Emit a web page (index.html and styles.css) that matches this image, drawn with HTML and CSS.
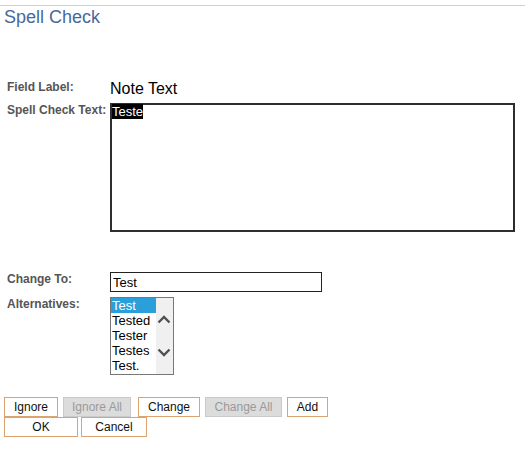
FILE: index.html
```html
<!DOCTYPE html>
<html>
<head>
<meta charset="utf-8">
<title>Spell Check</title>
<link rel="stylesheet" href="styles.css">
</head>
<body>
<div class="topline"></div>
<h1 class="title">Spell Check</h1>
<div class="form">
  <div class="row row-field">
    <div class="label">Field Label:</div>
    <div class="value">Note Text</div>
  </div>
  <div class="row row-text">
    <div class="label">Spell Check Text:</div>
    <div class="textbox"><span class="sel">Teste</span></div>
  </div>
  <div class="row row-change">
    <div class="label">Change To:</div>
    <input class="change-input" type="text" value="Test">
  </div>
  <div class="row row-alt">
    <div class="label">Alternatives:</div>
    <div class="listbox">
      <div class="items">
        <div class="item selected">Test</div>
        <div class="item">Tested</div>
        <div class="item">Tester</div>
        <div class="item">Testes</div>
        <div class="item">Test.</div>
      </div>
      <div class="scrollbar">
        <svg class="arrow up" width="14" height="9" viewBox="0 0 14 9"><path d="M1.5 7.5 L7 2 L12.5 7.5" fill="none" stroke="#505050" stroke-width="2.4"/></svg>
        <svg class="arrow down" width="14" height="9" viewBox="0 0 14 9"><path d="M1.5 1.5 L7 7 L12.5 1.5" fill="none" stroke="#505050" stroke-width="2.4"/></svg>
      </div>
    </div>
  </div>
</div>
<div class="buttons">
  <div class="btn-row">
    <button class="btn b-ignore">Ignore</button>
    <button class="btn disabled b-ignoreall">Ignore All</button>
    <button class="btn b-change">Change</button>
    <button class="btn disabled b-changeall">Change All</button>
    <button class="btn b-add">Add</button>
  </div>
  <div class="btn-row row2">
    <button class="btn b-ok">OK</button>
    <button class="btn b-cancel">Cancel</button>
  </div>
</div>
</body>
</html>
```
FILE: styles.css
```css
html, body {
  margin: 0;
  padding: 0;
  background: #fff;
}
body {
  font-family: "Liberation Sans", Arial, sans-serif;
  color: #000;
}
.topline {
  margin-top: 5px;
  border-top: 1px solid #cfcfd4;
}
.title {
  margin: 0;
  padding-left: 4px;
  font-size: 18px;
  font-weight: normal;
  line-height: 22px;
  color: #46699a;
}
.form {
  padding-left: 7px;
  margin-top: 52px;
}
.row {
  display: flex;
  align-items: flex-start;
}
.label {
  width: 103px;
  flex: none;
  font-size: 12px;
  line-height: 14px;
  font-weight: bold;
  color: #555;
}
.row-field { margin-bottom: 5px; }
.value {
  font-size: 16px;
  line-height: 18px;
}
.row-text { margin-bottom: 40px; }
.textbox {
  width: 401px;
  height: 125px;
  border: 2px solid #2e2e2e;
  font-size: 13px;
  line-height: 14px;
}
.sel {
  background: #000;
  color: #fff;
}
.row-change { margin-bottom: 5px; }
.change-input {
  box-sizing: border-box;
  width: 212px;
  height: 20px;
  margin: 0;
  padding: 0 2px;
  border: 1px solid #222;
  font-family: "Liberation Sans", Arial, sans-serif;
  font-size: 13px;
  line-height: 18px;
  color: #000;
  outline: none;
}
.listbox {
  box-sizing: border-box;
  width: 64px;
  height: 78px;
  border: 1px solid #777;
  display: flex;
}
.items {
  width: 45px;
  font-size: 13px;
  line-height: 15px;
}
.item {
  height: 15px;
  padding-left: 1px;
  white-space: nowrap;
}
.item.selected {
  background: #2a9fd9;
  color: #fff;
}
.scrollbar {
  flex: 1;
  background: #f0f0f0;
  position: relative;
}
.arrow {
  position: absolute;
  left: 1px;
  display: block;
}
.arrow.up { top: 17px; }
.arrow.down { top: 50px; }
.buttons {
  margin-top: 22px;
  padding-left: 4px;
}
.btn-row {
  display: flex;
  gap: 5px;
}
.btn-row.row2 { gap: 3px; }
.btn {
  box-sizing: border-box;
  height: 20px;
  margin: 0;
  padding: 0;
  border: 1px solid #daa370;
  background: #fff;
  font-family: "Liberation Sans", Arial, sans-serif;
  font-size: 12px;
  line-height: 18px;
  color: #111;
  border-radius: 0;
  white-space: nowrap;
  text-align: center;
  flex: none;
}
.btn.disabled {
  background: #dcdcdc;
  border-color: #cacaca;
  color: #9a9a9a;
}
.b-ignore { width: 54px; }
.b-ignoreall { width: 68px; }
.b-change { width: 62px; margin-left: 2px; }
.b-changeall { width: 77px; }
.b-add { width: 41px; }
.b-ok { width: 74px; }
.b-cancel { width: 66px; }
```
